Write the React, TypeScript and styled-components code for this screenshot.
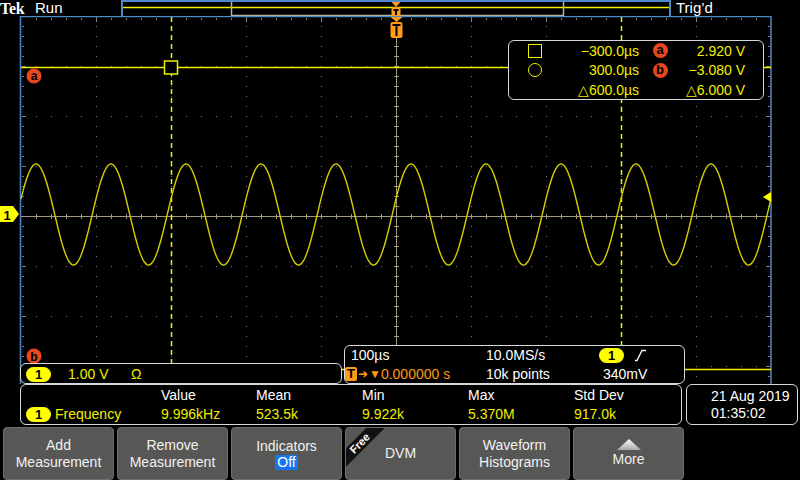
import React from 'react';
import styled, { createGlobalStyle } from 'styled-components';

const YELLOW = '#f2ee00';
const TRACE = '#d8d000';
const ORANGE = '#ff9a1a';
const BLUE = '#4d89c6';
const RED = '#e8461e';
const GRID = '#857b68';
const CENTER = '#a39a80';

const GlobalStyle = createGlobalStyle`
  html, body { margin: 0; padding: 0; background: #000; }
  body { width: 800px; height: 480px; overflow: hidden; font-family: "Liberation Sans", Arial, sans-serif; }
  * { box-sizing: border-box; }
`;

const Screen = styled.div`
  width: 800px;
  height: 480px;
  background: #000;
  color: #fff;
  font-size: 14px;
  display: flex;
  flex-direction: column;
`;

/* ---------- top bar ---------- */
const TopBar = styled.div`
  position: relative;
  z-index: 1;
  height: 16px;
  display: flex;
  align-items: flex-start;
`;
const Logo = styled.span`
  width: 34px;
  height: 18px;
  font-family: "Liberation Serif", serif;
  font-weight: bold;
  font-size: 16px;
  line-height: 18px;
  letter-spacing: -0.3px;
  white-space: nowrap;
`;
const RunLabel = styled.span`
  width: 87px;
  font-size: 15px;
  line-height: 15px;
  padding-left: 1px;
`;
const RecordView = styled.div`
  position: relative;
  width: 550px;
  height: 16px;
  border: 2px solid ${BLUE};
  border-bottom: none;
`;
const RecordSvg = styled.svg`
  display: block;
`;
const TrigLabel = styled.span`
  padding-left: 5px;
  font-size: 15px;
  line-height: 15px;
`;

/* ---------- scope area ---------- */
const ScopeArea = styled.div`
  position: relative;
  height: 368px;
`;
const ScopeSvg = styled.svg`
  display: block;
`;

const Readout = styled.div`
  position: absolute;
  left: 508px;
  top: 24px;
  width: 256px;
  height: 60px;
  background: #000;
  border: 1.5px solid #d8d8d8;
  border-radius: 6px;
  padding-left: 19px;
  display: grid;
  grid-template-columns: 14px 97px 42px 64px;
  grid-auto-rows: 19.5px;
  align-items: center;
  color: ${YELLOW};
  font-size: 14px;
`;
const ReadVal = styled.span`
  text-align: right;
  white-space: nowrap;
`;
const BadgeCell = styled.span`
  display: flex;
  justify-content: center;
`;
const CursorIcon = styled.span<{ $round?: boolean }>`
  width: 14px;
  height: 14px;
  border: 1.5px solid ${YELLOW};
  border-radius: ${(p) => (p.$round ? '50%' : '0')};
`;
const LetterBadge = styled.span`
  width: 15px;
  height: 15px;
  border-radius: 50%;
  background: ${RED};
  color: #000;
  font-weight: bold;
  font-size: 13px;
  line-height: 14px;
  text-align: center;
`;

const BottomBoxes = styled.div`
  position: absolute;
  left: 20px;
  top: 329px;
  display: flex;
  align-items: flex-end;
  gap: 2px;
`;
const ChannelBox = styled.div`
  width: 322px;
  height: 21px;
  background: #000;
  border: 1.5px solid #d8d8d8;
  border-radius: 6px;
  display: flex;
  align-items: center;
  padding-left: 5px;
  color: ${YELLOW};
  font-size: 14px;
`;
const ChannelText = styled.span<{ $w: number }>`
  width: ${(p) => p.$w}px;
`;
const Pill = styled.span`
  display: inline-block;
  width: 25px;
  height: 15px;
  border-radius: 8px;
  background: #ffff00;
  color: #000;
  font-weight: bold;
  font-size: 13px;
  line-height: 15px;
  text-align: center;
`;
const TimeBox = styled.div`
  width: 341px;
  height: 39px;
  background: #000;
  border: 1.5px solid #d8d8d8;
  border-radius: 6px;
  display: grid;
  grid-template-columns: 141px 113px 1fr;
  grid-template-rows: 18px 19px;
  align-items: center;
  font-size: 14px;
  color: #fff;
`;
const TimeCell = styled.span<{ $pad?: number; $color?: string }>`
  padding-left: ${(p) => p.$pad ?? 0}px;
  color: ${(p) => p.$color ?? '#fff'};
  display: flex;
  align-items: center;
  white-space: nowrap;
`;
const TIcon = styled.span`
  width: 12px;
  height: 14px;
  background: ${ORANGE};
  border-radius: 2px;
  color: #000;
  font-weight: bold;
  font-size: 13px;
  line-height: 14px;
  text-align: center;
`;
const Arrow = styled.span`
  color: ${ORANGE};
  font-size: 12px;
  margin-left: 1px;
`;

/* ---------- measurement row ---------- */
const MeasureRow = styled.div`
  height: 41px;
  display: flex;
  padding-left: 20px;
  gap: 4px;
`;
const MeasureBox = styled.div`
  width: 662px;
  border: 1.5px solid #d8d8d8;
  border-radius: 6px;
  display: grid;
  grid-template-columns: 140px 95px 106px 106px 106px 1fr;
  grid-template-rows: 20px 18px;
  align-items: center;
  font-size: 14px;
`;
const HeadCell = styled.span`
  color: #fff;
`;
const ValCell = styled.span`
  color: ${YELLOW};
  display: flex;
  align-items: center;
  gap: 4px;
  white-space: nowrap;
`;
const FirstCell = styled(ValCell)`
  padding-left: 5px;
`;
const DateBox = styled.div`
  width: 112px;
  border: 1.5px solid #d8d8d8;
  border-radius: 6px;
  padding: 3px 0 0 24px;
  display: flex;
  flex-direction: column;
  font-size: 14px;
  line-height: 17px;
  color: #fff;
`;

/* ---------- buttons ---------- */
const ButtonBar = styled.div`
  margin-top: 2px;
  height: 53px;
  display: flex;
  gap: 3px;
  padding-left: 3px;
`;
const SoftButton = styled.div`
  position: relative;
  overflow: hidden;
  width: 111px;
  height: 53px;
  background: #575755;
  border: 1px solid #6d6d6a;
  border-radius: 4px;
  display: flex;
  flex-direction: column;
  align-items: center;
  justify-content: center;
  color: #f2f2f2;
  font-size: 14px;
  line-height: 17px;
  text-align: center;
`;
const OffTag = styled.span`
  background: #1676ee;
  color: #fff;
  padding: 0 2px;
  line-height: 15px;
`;
const Ribbon = styled.span`
  position: absolute;
  left: -16px;
  top: 9px;
  width: 60px;
  height: 13px;
  background: #111;
  color: #fff;
  font-size: 11px;
  font-weight: bold;
  line-height: 13px;
  text-align: center;
  transform: rotate(-45deg);
`;
const MoreIcon = styled.svg`
  display: block;
  margin-bottom: 1px;
`;

/* ---------- drawing helpers ---------- */
const X0 = 21;
const X1 = 771;
const CY = 216;

function tracePath(): string {
  const pts: string[] = [];
  for (let x = X0; x <= X1; x += 1) {
    const y = 214.5 - 50.5 * Math.cos((2 * Math.PI * (x - 36)) / 75);
    pts.push(`${x === X0 ? 'M' : 'L'}${x} ${y.toFixed(2)}`);
  }
  return pts.join(' ');
}

function GridDots() {
  const dots: React.ReactElement[] = [];
  for (let i = 1; i < 10; i++) {
    if (i === 5) continue;
    const x = X0 + 75 * i;
    for (let y = 26; y < 385; y += 10) dots.push(<rect key={`v${i}-${y}`} x={x} y={y} width={1} height={1} />);
    dots.push(<rect key={`vt${i}`} x={x} y={17} width={1} height={5} />);
  }
  for (let j = 1; j < 8; j++) {
    if (j === 4) continue;
    const y = 16 + 50 * j;
    for (let x = 36; x < X1; x += 15) dots.push(<rect key={`h${j}-${x}`} x={x} y={y} width={1} height={1} />);
    dots.push(<rect key={`hl${j}`} x={22} y={y} width={4} height={1} />);
    dots.push(<rect key={`hr${j}`} x={766} y={y} width={4} height={1} />);
  }
  for (let x = 36; x < X1; x += 15) dots.push(<rect key={`te${x}`} x={x} y={18} width={1} height={2} />);
  for (let y = 26; y < 385; y += 10) {
    dots.push(<rect key={`le${y}`} x={22} y={y} width={2} height={1} />);
    dots.push(<rect key={`re${y}`} x={768} y={y} width={2} height={1} />);
  }
  const ticks: React.ReactElement[] = [];
  for (let x = 36; x < X1; x += 15) ticks.push(<rect key={`ct${x}`} x={x} y={CY - 2} width={1} height={5} />);
  for (let y = 26; y < 385; y += 10) ticks.push(<rect key={`cv${y}`} x={394} y={y} width={5} height={1} />);
  return (
    <>
      <g fill={GRID}>{dots}</g>
      <g fill={CENTER}>{ticks}</g>
    </>
  );
}

function TMarker({ x, y, w, h }: { x: number; y: number; w: number; h: number }) {
  return (
    <g>
      <polygon points={`${x - w / 2},${y} ${x + w / 2},${y} ${x},${y + 5}`} fill={ORANGE} />
      <rect x={x - w / 2} y={y + 5} width={w} height={h} rx={2} fill={ORANGE} />
      <rect x={x - w / 2 + 2} y={y + 7} width={w - 4} height={2} fill="#000" />
      <rect x={x - 1} y={y + 7} width={2} height={h - 4} fill="#000" />
    </g>
  );
}

export default function App() {
  const path = tracePath();
  return (
    <>
      <GlobalStyle />
      <Screen>
        <TopBar>
          <Logo>Tek</Logo>
          <RunLabel>Run</RunLabel>
          <RecordView>
            <RecordSvg width={546} height={14} viewBox="123 2 546 14">
              <line x1={123} y1={7.5} x2={669} y2={7.5} stroke={YELLOW} strokeWidth={1.5} />
              <rect x={231.5} y={1} width={332} height={14.5} fill="none" stroke="#b7b0a0" strokeWidth={1.5} />
              <TMarker x={396} y={2} w={9} h={10} />
            </RecordSvg>
          </RecordView>
          <TrigLabel>Trig’d</TrigLabel>
        </TopBar>

        <ScopeArea>
          <ScopeSvg width={800} height={368} viewBox="0 16 800 368">
            <GridDots />
            <line x1={396.5} y1={16} x2={396.5} y2={385} stroke={CENTER} strokeWidth={1} />
            <line x1={X0} y1={CY + 0.5} x2={X1} y2={CY + 0.5} stroke={CENTER} strokeWidth={1} />
            <path d={`M20.5 385 V16.5 H771 V385`} fill="none" stroke={BLUE} strokeWidth={1.5} />

            <line x1={171.5} y1={17} x2={171.5} y2={385} stroke={YELLOW} strokeWidth={1.5} strokeDasharray="5 4" />
            <line x1={621.5} y1={17} x2={621.5} y2={385} stroke={YELLOW} strokeWidth={1.5} strokeDasharray="5 4" />
            <line x1={X0} y1={67.5} x2={X1} y2={67.5} stroke={YELLOW} strokeWidth={1.5} />
            <line x1={X0} y1={369.5} x2={X1} y2={369.5} stroke={YELLOW} strokeWidth={1.5} />
            <rect x={164.5} y={61} width={13} height={13} fill="#000" stroke={YELLOW} strokeWidth={1.5} />

            <path d={path} fill="none" stroke={TRACE} strokeWidth={1.4} />

            <TMarker x={396.5} y={17} w={12} h={16} />

            <polygon points="0,206 13,206 19,214 13,222 0,222" fill="#ffff00" />
            <text x={7} y={219.5} fontSize={13} fontWeight="bold" fill="#000" textAnchor="middle" fontFamily="Liberation Sans, Arial, sans-serif">1</text>

            <polygon points="763,197 771,192 771,202" fill="#ffff00" />

            <circle cx={34} cy={76} r={7.5} fill={RED} />
            <text x={34} y={80} fontSize={12} fontWeight="bold" fill="#000" textAnchor="middle" fontFamily="Liberation Sans, Arial, sans-serif">a</text>
            <circle cx={34} cy={356} r={7.5} fill={RED} />
            <text x={34} y={360.5} fontSize={12} fontWeight="bold" fill="#000" textAnchor="middle" fontFamily="Liberation Sans, Arial, sans-serif">b</text>
          </ScopeSvg>

          <Readout>
            <CursorIcon />
            <ReadVal>−300.0µs</ReadVal>
            <BadgeCell><LetterBadge>a</LetterBadge></BadgeCell>
            <ReadVal>2.920 V</ReadVal>
            <CursorIcon $round />
            <ReadVal>300.0µs</ReadVal>
            <BadgeCell><LetterBadge>b</LetterBadge></BadgeCell>
            <ReadVal>−3.080 V</ReadVal>
            <span />
            <ReadVal>△600.0µs</ReadVal>
            <span />
            <ReadVal>△6.000 V</ReadVal>
          </Readout>

          <BottomBoxes>
            <ChannelBox>
              <ChannelText $w={42}><Pill>1</Pill></ChannelText>
              <ChannelText $w={63}>1.00 V</ChannelText>
              <ChannelText $w={30}>Ω</ChannelText>
            </ChannelBox>
            <TimeBox>
              <TimeCell $pad={6}>100µs</TimeCell>
              <TimeCell>10.0MS/s</TimeCell>
              <TimeCell>
                <Pill>1</Pill>
                <svg width={14} height={13} viewBox="0 0 14 13" style={{ marginLeft: 10 }}>
                  <path d="M1 11.5 H3 L8 1.5 H12" fill="none" stroke="#fff" strokeWidth={1.3} />
                </svg>
              </TimeCell>
              <TimeCell $color={ORANGE}>
                <TIcon>T</TIcon>
                <Arrow>➜</Arrow>
                <Arrow>▼</Arrow>
                0.000000 s
              </TimeCell>
              <TimeCell>10k points</TimeCell>
              <TimeCell $pad={4}>340mV</TimeCell>
            </TimeBox>
          </BottomBoxes>
        </ScopeArea>

        <MeasureRow>
          <MeasureBox>
            <span />
            <HeadCell>Value</HeadCell>
            <HeadCell>Mean</HeadCell>
            <HeadCell>Min</HeadCell>
            <HeadCell>Max</HeadCell>
            <HeadCell>Std Dev</HeadCell>
            <FirstCell><Pill>1</Pill>Frequency</FirstCell>
            <ValCell>9.996kHz</ValCell>
            <ValCell>523.5k</ValCell>
            <ValCell>9.922k</ValCell>
            <ValCell>5.370M</ValCell>
            <ValCell>917.0k</ValCell>
          </MeasureBox>
          <DateBox>
            <span>21 Aug 2019</span>
            <span>01:35:02</span>
          </DateBox>
        </MeasureRow>

        <ButtonBar>
          <SoftButton><span>Add</span><span>Measurement</span></SoftButton>
          <SoftButton><span>Remove</span><span>Measurement</span></SoftButton>
          <SoftButton><span>Indicators</span><OffTag>Off</OffTag></SoftButton>
          <SoftButton><Ribbon>Free</Ribbon><span>DVM</span></SoftButton>
          <SoftButton><span>Waveform</span><span>Histograms</span></SoftButton>
          <SoftButton>
            <MoreIcon width={24} height={11} viewBox="0 0 24 11">
              <defs>
                <linearGradient id="moreGrad" x1="0" y1="0" x2="0" y2="1">
                  <stop offset="0" stopColor="#ffffff" />
                  <stop offset="1" stopColor="#a8a8a6" />
                </linearGradient>
              </defs>
              <polygon points="12,0 24,11 0,11" fill="url(#moreGrad)" />
            </MoreIcon>
            <span>More</span>
          </SoftButton>
        </ButtonBar>
      </Screen>
    </>
  );
}
